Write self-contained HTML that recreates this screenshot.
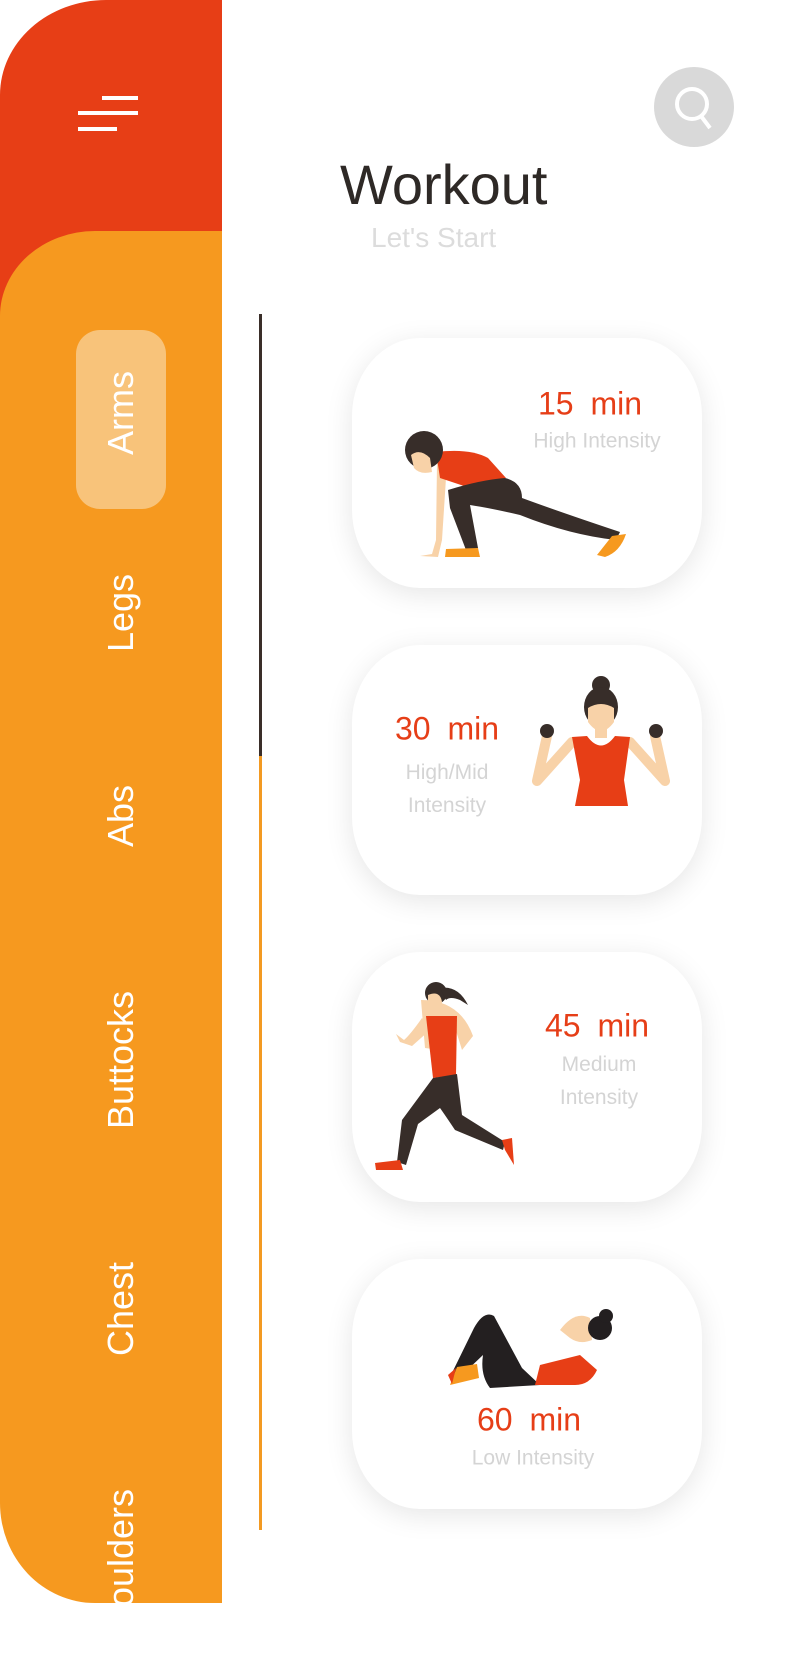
<!DOCTYPE html>
<html><head><meta charset="utf-8"><style>
*{margin:0;padding:0;box-sizing:border-box}
body{width:790px;height:1659px;background:#fff;position:relative;overflow:hidden;font-family:"Liberation Sans",sans-serif}
.red{position:absolute;left:0;top:0;width:222px;height:330px;background:#e73e16;border-top-left-radius:106px 95px}
.orange{position:absolute;left:0;top:231px;width:222px;height:1372px;background:#f6991f;border-radius:95px 0 0 95px/85px 0 0 100px;overflow:hidden}
.pill{position:absolute;left:76px;top:99px;width:90px;height:179px;background:#f8c37a;border-radius:24px}
.vt{position:absolute;color:#fff;font-size:36px;white-space:nowrap;transform:translate(-50%,-50%) rotate(-90deg);left:121px}
.card{position:absolute;left:352px;width:350px;height:250px;background:#fff;border-radius:68px/78px;box-shadow:0 6px 28px rgba(0,0,0,0.10)}
.t{position:absolute;white-space:nowrap;transform:translate(-50%,-50%);text-align:center}
.min{color:#e63e17;font-size:32px;word-spacing:8px}
.sub{color:#d4d4d4;font-size:21px;line-height:33px}
.line{position:absolute;left:259px;width:3px}
</style></head><body>
<div class="red"></div>
<div style="position:absolute;left:102px;top:96px;width:36px;height:4px;background:#fff"></div>
<div style="position:absolute;left:78px;top:111px;width:60px;height:4px;background:#fff"></div>
<div style="position:absolute;left:78px;top:127px;width:39px;height:4px;background:#fff"></div>
<div class="orange">
 <div class="pill"></div>
 <div class="vt" style="top:182px">Arms</div>
 <div class="vt" style="top:382px">Legs</div>
 <div class="vt" style="top:585px">Abs</div>
 <div class="vt" style="top:829px">Buttocks</div>
 <div class="vt" style="top:1078px">Chest</div>
 <div class="vt" style="top:1339px">Shoulders</div>
</div>
<div style="position:absolute;left:654px;top:67px;width:80px;height:80px;border-radius:50%;background:#d9d9d9"></div>
<svg style="position:absolute;left:654px;top:67px" width="80" height="80"><circle cx="38" cy="37" r="15" fill="none" stroke="#fff" stroke-width="4"/><line x1="47" y1="49" x2="56" y2="61" stroke="#fff" stroke-width="4"/></svg>
<div style="position:absolute;left:340px;top:152px;font-size:56px;color:#2e2926">Workout</div>
<div style="position:absolute;left:371px;top:222px;font-size:28px;color:#dcdcdc">Let's Start</div>
<div class="line" style="top:314px;height:442px;background:#3a2e29"></div>
<div class="line" style="top:756px;height:774px;background:#f39a22"></div>

<div class="card" style="top:338px"></div>
<div class="card" style="top:645px"></div>
<div class="card" style="top:952px"></div>
<div class="card" style="top:1259px"></div>

<div class="t min" style="left:590px;top:404px">15 min</div>
<div class="t sub" style="left:597px;top:441px">High Intensity</div>
<div class="t min" style="left:447px;top:729px">30 min</div>
<div class="t sub" style="left:447px;top:789px">High/Mid<br>Intensity</div>
<div class="t min" style="left:597px;top:1026px">45 min</div>
<div class="t sub" style="left:599px;top:1081px">Medium<br>Intensity</div>
<div class="t min" style="left:529px;top:1420px">60 min</div>
<div class="t sub" style="left:533px;top:1458px">Low Intensity</div>

<svg style="position:absolute;left:0;top:0" width="790" height="1659">
 <!-- card1 lunge -->
 <path d="M437 462 L436 540 L432 554 L420 556 L438 557 L442 540 L446 478 Z" fill="#f8d2a8"/>
 <path d="M436 452 Q470 448 488 458 L506 478 L470 488 L440 478 Z" fill="#e73e16"/>
 <path d="M448 490 Q480 480 505 478 Q522 482 522 498 Q560 512 620 532 L616 540 Q570 535 520 515 Q490 508 470 505 L478 548 L466 550 L450 508 Z" fill="#372d29"/>
 <circle cx="424" cy="450" r="19" fill="#372d29"/>
 <path d="M411 455 Q420 448 430 458 L432 472 Q420 475 414 468 Z" fill="#f8d2a8"/>
 <path d="M446 549 L478 548 L480 557 L445 557 Z" fill="#f6991f"/>
 <path d="M612 536 L626 534 Q620 552 605 557 L597 555 Z" fill="#f6991f"/>
 <!-- card2 dumbbells -->
 <polyline points="572,742 537,781 547,736" fill="none" stroke="#f8d2a8" stroke-width="10" stroke-linejoin="round" stroke-linecap="round"/>
 <polyline points="630,742 665,781 655,736" fill="none" stroke="#f8d2a8" stroke-width="10" stroke-linejoin="round" stroke-linecap="round"/>
 <circle cx="547" cy="731" r="7" fill="#372d29"/><circle cx="656" cy="731" r="7" fill="#372d29"/>
 <circle cx="601" cy="685" r="9" fill="#372d29"/>
 <ellipse cx="601" cy="707" rx="17" ry="20" fill="#372d29"/>
 <path d="M588 708 Q601 700 614 708 L614 722 Q601 740 588 722 Z" fill="#f8d2a8"/>
 <rect x="595" y="726" width="12" height="12" fill="#f8d2a8"/>
 <path d="M572 737 L587 736 Q601 755 615 736 L630 737 L624 780 L628 806 L575 806 L580 780 Z" fill="#e73e16"/>
 <!-- card3 runner -->
 <path d="M421 1000 Q460 1000 473 1036 L462 1050 Q454 1024 452 1020 L440 1050 L425 1048 Z" fill="#f8d2a8"/>
 <path d="M422 1018 Q410 1035 404 1040 L396 1034 L400 1042 L412 1046 L430 1030 Z" fill="#f8d2a8"/>
 <path d="M426 1016 L457 1016 L456 1075 L433 1078 Z" fill="#e73e16"/>
 <path d="M433 1078 L457 1074 L462 1115 L505 1142 L503 1150 L455 1130 Q445 1115 440 1108 L418 1124 L406 1165 L397 1162 L402 1120 Z" fill="#372d29"/>
 <path d="M375 1163 L400 1160 L403 1170 L376 1170 Z" fill="#e73e16"/>
 <path d="M502 1140 L512 1138 L514 1165 L505 1150 Z" fill="#e73e16"/>
 <circle cx="436" cy="993" r="11" fill="#372d29"/>
 <path d="M440 988 Q458 985 468 1005 L460 1000 Q450 996 446 1000 Z" fill="#372d29"/>
 <path d="M428 995 Q440 990 442 1002 L440 1015 L428 1012 Z" fill="#f8d2a8"/>
 <!-- card4 crunch -->
 <path d="M450 1377 L474 1328 Q484 1310 494 1316 L522 1368 L540 1385 L490 1388 Q480 1375 483 1355 L462 1375 Z" fill="#231f20"/>
 <path d="M540 1365 L580 1355 L597 1370 Q590 1385 575 1385 L535 1385 Z" fill="#e73e16"/>
 <path d="M560 1330 Q575 1310 590 1318 L592 1340 Q580 1345 570 1338 Z" fill="#f8d2a8"/>
 <circle cx="600" cy="1328" r="12" fill="#231f20"/><circle cx="606" cy="1316" r="7" fill="#231f20"/>
 <path d="M457 1367 L477 1364 L479 1378 L450 1385 Z" fill="#f6991f"/>
 <path d="M448 1375 L456 1368 L452 1384 Z" fill="#e73e16"/>
</svg>
</body></html>
